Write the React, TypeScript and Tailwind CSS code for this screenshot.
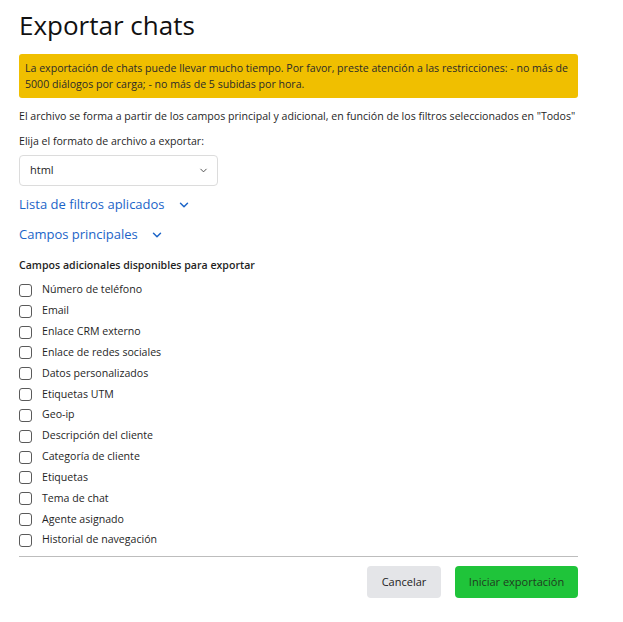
import { ChevronDown } from 'lucide-react';

const fields = [
  'Número de teléfono',
  'Email',
  'Enlace CRM externo',
  'Enlace de redes sociales',
  'Datos personalizados',
  'Etiquetas UTM',
  'Geo-ip',
  'Descripción del cliente',
  'Categoría de cliente',
  'Etiquetas',
  'Tema de chat',
  'Agente asignado',
  'Historial de navegación',
];

const App = () => {
  return (
    <div className="min-h-[622px] w-full bg-white font-['Open_Sans',sans-serif] text-[#1f1f1f]">
      <div className="flex w-[578px] flex-col pl-[19px] pt-[8px]">
        <h1 className="text-[26px] leading-[34px] font-normal text-[#111]">Exportar chats</h1>

        <div className="mt-[12px] rounded-[3px] bg-[#f0bf00] px-[6px] py-[6px] text-[10.6px] leading-[16px] text-[#2a2a2a]">
          La exportación de chats puede llevar mucho tiempo. Por favor, preste atención a las restricciones: - no más de 5000 diálogos por carga; - no más de 5 subidas por hora.
        </div>

        <p className="mt-[10px] text-[10.6px] leading-[16px] whitespace-nowrap">
          El archivo se forma a partir de los campos principal y adicional, en función de los filtros seleccionados en "Todos"
        </p>

        <p className="mt-[9px] text-[10.6px] leading-[16px]">Elija el formato de archivo a exportar:</p>

        <div className="mt-[6px] flex h-[31px] w-[199px] items-center justify-between rounded-[4px] border border-[#dcdcdc] pr-[8px] pl-[10px] text-[11px]">
          <span>html</span>
          <ChevronDown size={11} strokeWidth={2} className="text-[#444]" />
        </div>

        <button className="mt-[9px] flex h-[20px] items-center gap-[12px] text-[13px] text-[#1b64c8]">
          Lista de filtros aplicados
          <ChevronDown size={14} strokeWidth={2.5} />
        </button>

        <button className="mt-[10px] flex h-[20px] items-center gap-[12px] text-[13px] text-[#1b64c8]">
          Campos principales
          <ChevronDown size={14} strokeWidth={2.5} />
        </button>

        <div className="mt-[12px] text-[10.6px] leading-[16px] font-semibold">
          Campos adicionales disponibles para exportar
        </div>

        <div className="mt-[7px] flex flex-col">
          {fields.map((f) => (
            <label key={f} className="flex h-[20.83px] items-center gap-[10px] text-[10.6px]">
              <span className="h-[13px] w-[13px] rounded-[3px] border border-[#5a5a5a]" />
              {f}
            </label>
          ))}
        </div>

        <div className="mt-[5px] h-px w-full bg-[#bdbdbd]" />

        <div className="mt-[9px] flex justify-end gap-[14px]">
          <button className="h-[32px] w-[74px] rounded-[4px] bg-[#e4e5e8] text-[11px] text-[#222]">Cancelar</button>
          <button className="h-[32px] w-[123px] rounded-[4px] bg-[#1fc43a] text-[11px] text-[#1f3a1f]">Iniciar exportación</button>
        </div>
      </div>
    </div>
  );
};

export default App;
